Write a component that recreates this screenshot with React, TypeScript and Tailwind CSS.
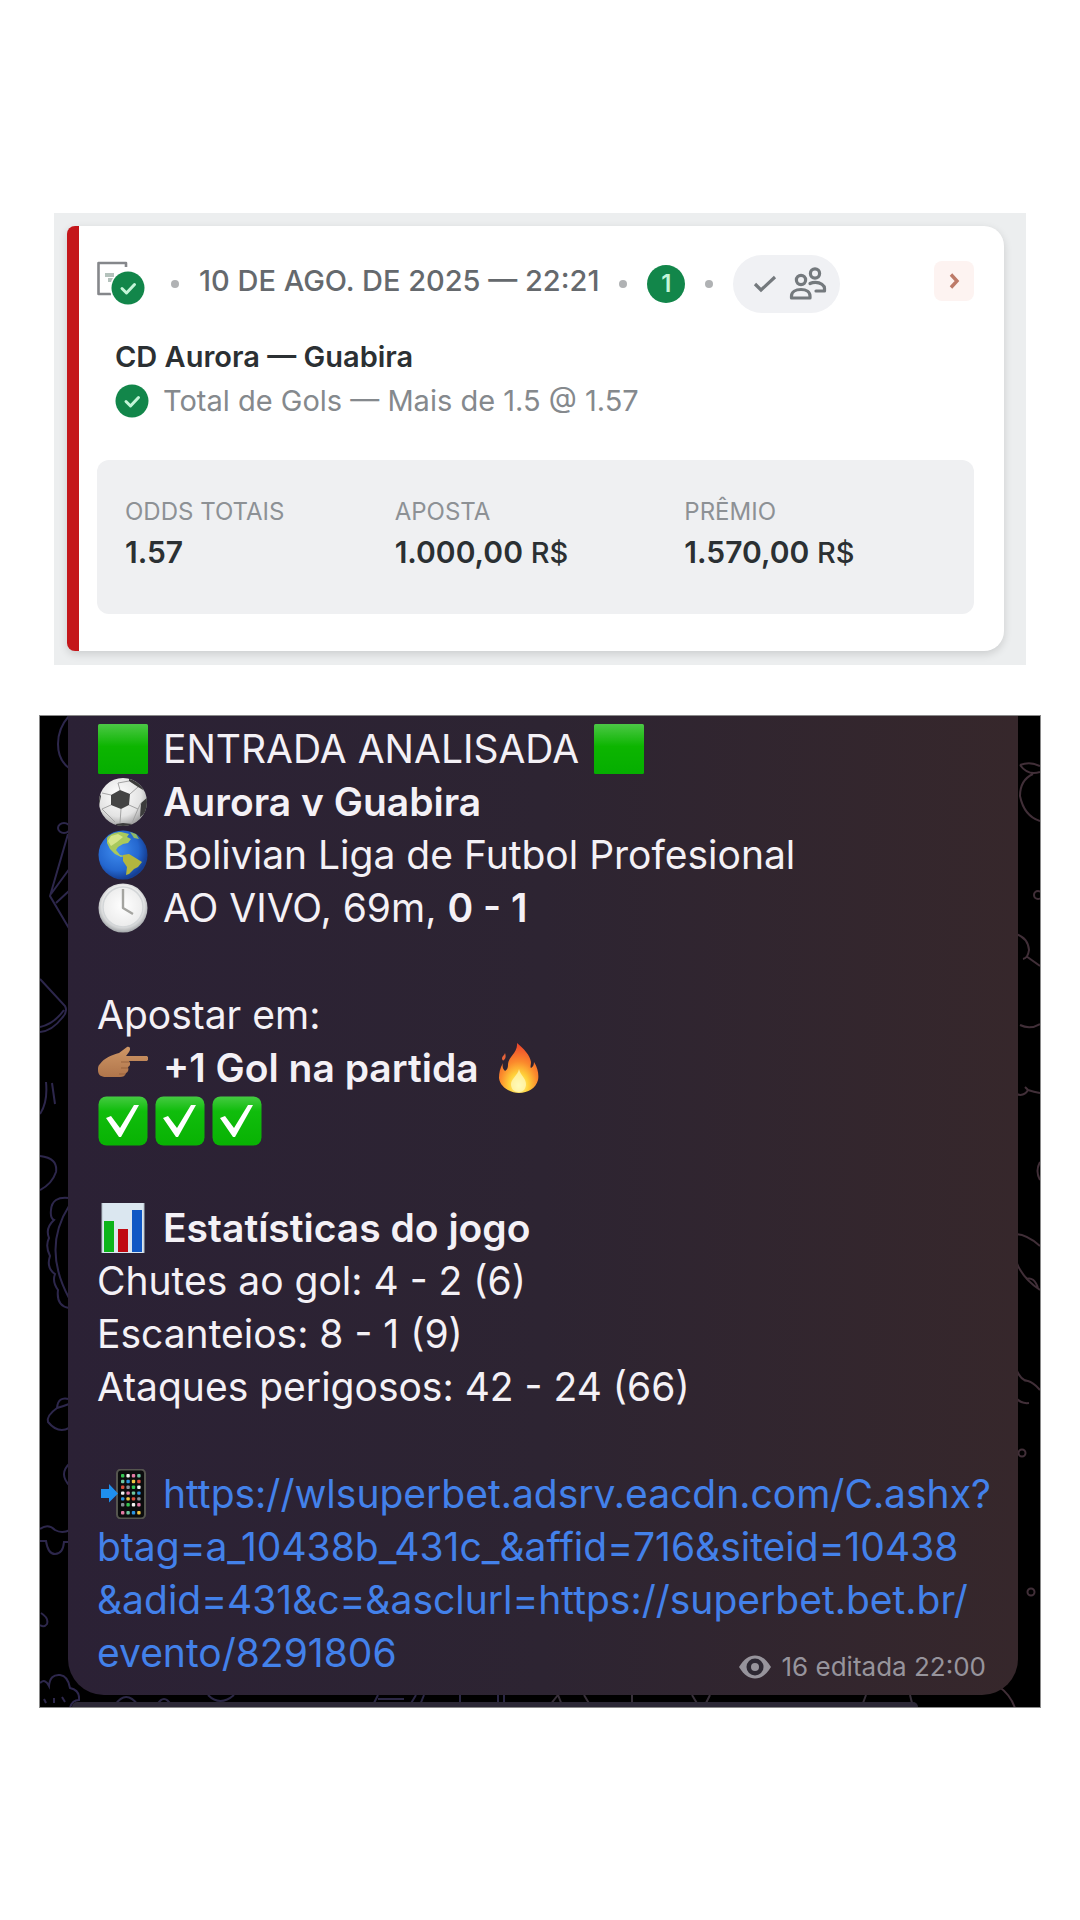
import React from "react";

const FONT = "font-['Inter','Liberation_Sans',sans-serif]";

function CheckBadge() {
  return (
    <svg viewBox="0 0 34 34" className="size-[34px] shrink-0" aria-hidden="true">
      <circle cx="17" cy="17" r="16.5" fill="#12864a" />
      <path d="M11 17.5l4.5 4.5 8-8.5" fill="none" stroke="#c4f5d8" strokeWidth="3" strokeLinecap="round" strokeLinejoin="round" />
    </svg>
  );
}

function TicketIcon() {
  return (
    <svg viewBox="0 0 50 46" className="h-[46px] w-[50px] shrink-0" aria-hidden="true">
      <path d="M29 6V2H1.500v31H14" fill="none" stroke="#85878b" strokeWidth="2.600" strokeLinejoin="round" />
      <path d="M8 14h9M11 19h5" stroke="#b4c2bc" strokeWidth="4" />
      <circle cx="31" cy="27" r="18" fill="#fff" />
      <circle cx="31" cy="27" r="16.5" fill="#12864a" />
      <path d="M25 27.5l4.5 4.5 8-8.5" fill="none" stroke="#c4f5d8" strokeWidth="3" strokeLinecap="round" strokeLinejoin="round" />
    </svg>
  );
}

function Dot() {
  return <span className="size-2 shrink-0 rounded-sm bg-[#b0b2b4]" />;
}

function PeopleIcon() {
  return (
    <svg viewBox="0 0 38 34" className="h-[34px] w-[38px]" fill="none" stroke="#74797d" strokeWidth="3.200" strokeLinejoin="round" strokeLinecap="round" aria-hidden="true">
      <circle cx="12" cy="13" r="4.600" />
      <path d="M2.500 31v-2c0-4 4-6.500 9.500-6.500s9 2.500 9 6.500v2z" />
      <circle cx="26" cy="6.500" r="4.600" />
      <path d="M21 16.500c2-1 3.500-1.200 5.500-1.200 5 0 9 3.200 9 6v2.700H27" />
    </svg>
  );
}

function Stat({ label, value, unit }: { label: string; value: string; unit?: string }) {
  return (
    <div>
      <dt className="text-2xl leading-9 text-[#8d9195]">{label}</dt>
      <dd className="text-[30px] leading-[44px] font-semibold text-[#2b3033]">
        {value}
        {unit && <span className="text-[29px] font-medium"> {unit}</span>}
      </dd>
    </div>
  );
}

function BetCard() {
  return (
    <section className="mx-[54px] bg-[#eceeef] pt-[13px] pr-[22px] pb-[14px] pl-[13px]">
      <article className="rounded-l-lg rounded-r-[20px] border-l-[12px] border-[#c4161a] bg-white pt-[29px] pr-[30px] pb-[37px] pl-[18px] shadow-[0_3px_8px_rgba(0,0,0,0.14)]">
        <header className="flex h-[58px] items-center">
          <TicketIcon />
          <div className="ml-6 flex items-center gap-5">
            <Dot />
            <time className="pb-1.5 text-[29px] leading-9 font-medium whitespace-nowrap text-[#65696d]">10 DE AGO. DE 2025 — 22:21</time>
            <Dot />
            <span className="flex size-[38px] items-center justify-center rounded-full bg-[#12864a] text-2xl font-semibold text-[#c4f5d8]">1</span>
            <Dot />
            <span className="flex h-[58px] items-center gap-3 rounded-full bg-[#f0f1f4] pr-[13px] pl-5">
              <svg viewBox="0 0 24 20" className="h-5 w-6" aria-hidden="true">
                <path d="M2 10l6 6L22 3" fill="none" stroke="#74797d" strokeWidth="3.200" />
              </svg>
              <PeopleIcon />
            </span>
          </div>
          <button type="button" aria-label="Abrir aposta" className="mb-1.5 ml-auto flex size-10 items-center justify-center rounded-lg bg-[#fdf3f1]">
            <svg viewBox="0 0 12 18" className="h-[18px] w-3" aria-hidden="true">
              <path d="M3 2.500L9 9l-6 6.500" fill="none" stroke="#bd7a68" strokeWidth="3.400" />
            </svg>
          </button>
        </header>

        <div className="mt-[22px] pl-[18px]">
          <h2 className="text-[29px] leading-[44px] font-semibold text-[#2b3033]">CD Aurora — Guabira</h2>
          <p className="flex items-center gap-[14px] text-[29px] leading-[44px] text-[#85898d]">
            <CheckBadge />
            Total de Gols — Mais de 1.5 @ 1.57
          </p>
        </div>

        <dl className="mt-[37px] grid grid-cols-[270fr_290fr_262fr] rounded-xl bg-[#eff0f2] px-7 pt-[34px] pb-[39px]">
          <Stat label="ODDS TOTAIS" value="1.57" />
          <Stat label="APOSTA" value="1.000,00" unit="R$" />
          <Stat label="PRÊMIO" value="1.570,00" unit="R$" />
        </dl>
      </article>
    </section>
  );
}

function Emoji({ children, label }: { children: React.ReactNode; label: string }) {
  return (
    <svg viewBox="0 0 50 50" className="mx-px size-[50px] shrink-0" role="img" aria-label={label}>
      {children}
    </svg>
  );
}

function GreenSquare() {
  return (
    <Emoji label="Quadrado verde">
      <defs>
        <linearGradient id="sq" x1="0" y1="0" x2="0" y2="1">
          <stop offset="0" stopColor="#4cc846" />
          <stop offset="0.45" stopColor="#0cb500" />
          <stop offset="1" stopColor="#05ae00" />
        </linearGradient>
      </defs>
      <rect width="50" height="50" rx="1.500" fill="url(#sq)" />
    </Emoji>
  );
}

function Ball() {
  return (
    <Emoji label="Bola de futebol">
      <defs>
        <radialGradient id="ball" cx="0.42" cy="0.35" r="0.65">
          <stop offset="0" stopColor="#ffffff" />
          <stop offset="0.7" stopColor="#e3e3e3" />
          <stop offset="1" stopColor="#a5a5a5" />
        </radialGradient>
        <clipPath id="ballClip"><circle cx="25" cy="25" r="24" /></clipPath>
      </defs>
      <circle cx="25" cy="25" r="24" fill="url(#ball)" />
      <g clipPath="url(#ballClip)">
        <path d="M13 18l9-5 10 4-1 11-8 4-10-4z" fill="#444" />
        <path d="M31 0l10 5 6 9-7-4-9-6zM43 26l7-6v14l-8 6zM18 47l7-1 9 1-3 4H19zM0 14l3 5-2 10z" fill="#3c3c3c" />
        <path d="M22 13l-2-7 11-2M32 17l8-7M31 28l9 4 3-6M23 32l-1 14M13 28l-9 4M13 18l-9-2M40 32l-6 14M4 32l13 13" fill="none" stroke="#a3a3a3" strokeWidth="1" />
      </g>
    </Emoji>
  );
}

function Globe() {
  return (
    <Emoji label="Globo terrestre">
      <defs>
        <radialGradient id="sea" cx="0.4" cy="0.4" r="0.6">
          <stop offset="0" stopColor="#3f8df0" />
          <stop offset="0.7" stopColor="#2467cf" />
          <stop offset="1" stopColor="#153f94" />
        </radialGradient>
      </defs>
      <circle cx="25" cy="25" r="24.500" fill="url(#sea)" />
      <path d="M9 8c3-4 9-6 14-6l8 2-2 3 4 2-3 4-5 1-5 3-2 3 4 5 5 1-4 1-6-3-5-5-3-6z" fill="#a9c95c" />
      <path d="M13 6l7-2 5 3-6 5-6 4-3-5z" fill="#d6e58b" />
      <path d="M25 25l6-1 5 3 8 5-4 5-4 2-5 5-3 1 1-8-4-6z" fill="#b3b63e" />
      <path d="M32 2l6 2 3 5-5-1z" fill="#8fb765" />
    </Emoji>
  );
}

function Clock() {
  return (
    <Emoji label="Quatro horas">
      <defs>
        <radialGradient id="clock" cx="0.5" cy="0.45" r="0.55">
          <stop offset="0" stopColor="#ffffff" />
          <stop offset="0.75" stopColor="#ececec" />
          <stop offset="1" stopColor="#a2a6a9" />
        </radialGradient>
      </defs>
      <circle cx="25" cy="25" r="24.500" fill="url(#clock)" />
      <circle cx="25" cy="24" r="20" fill="none" stroke="#d3d6d8" strokeWidth="1.500" />
      <path d="M25 6v19l10 6" fill="none" stroke="#a4a4a0" strokeWidth="2.400" strokeLinejoin="round" />
    </Emoji>
  );
}

function Hand() {
  return (
    <Emoji label="Apontando para a direita">
      <defs>
        <linearGradient id="hand" x1="0" y1="0" x2="0" y2="1">
          <stop offset="0" stopColor="#cf9766" />
          <stop offset="1" stopColor="#b0754b" />
        </linearGradient>
      </defs>
      <path d="M2 21C6 15 14 12 21 10l8-6c3-1 4 2 2 5l-3 4h20c3 0 3 5 0 5H31c2 3 1 5-1 6 1 3 0 5-2 6-1 3-3 4-6 4H8c-5 0-8-2-8-7 0-3 0-4 2-6z" fill="url(#hand)" />
      <path d="M31 19h-8M30 25h-7M27 31h-6" stroke="#99633d" strokeWidth="1" />
    </Emoji>
  );
}

function Fire() {
  return (
    <Emoji label="Fogo">
      <defs>
        <radialGradient id="fire" cx="0.5" cy="0.85" r="0.8">
          <stop offset="0" stopColor="#fff9a8" />
          <stop offset="0.3" stopColor="#ffd23a" />
          <stop offset="0.6" stopColor="#fb8a2c" />
          <stop offset="1" stopColor="#ee4a2c" />
        </radialGradient>
      </defs>
      <path d="M23 0c7 6 13 12 14 19 0 3-1 5 0 6 2-1 3-3 3-6 4 6 5 13 4 18-2 8-10 13-19 13S6 44 5 35c0-5 1-10 4-15-1 4 0 6 2 8 2-1 3-3 3-6 0-9 10-12 9-22z" fill="url(#fire)" />
      <path d="M8 15c0-2 3-3 3-5 1 3 1 5-1 7-1 1-2 0-2-2z" fill="#e8643a" />
      <path d="M25 26c1 6 7 9 7 15 0 5-3 8-7 8-5 0-8-3-8-8 0-5 7-9 8-15z" fill="#fffbc0" opacity="0.7" />
    </Emoji>
  );
}

function CheckEmoji() {
  return (
    <Emoji label="Concluído">
      <defs>
        <linearGradient id="chk" x1="0" y1="0" x2="0" y2="1">
          <stop offset="0" stopColor="#45cb42" />
          <stop offset="0.3" stopColor="#10bd0c" />
          <stop offset="1" stopColor="#08b203" />
        </linearGradient>
      </defs>
      <rect x="0.500" y="0.500" width="49" height="49" rx="8" fill="url(#chk)" />
      <path d="M8 22l5-2 9 12L36 9h5L23 41h-2z" fill="#fff" />
    </Emoji>
  );
}

function ChartEmoji() {
  return (
    <Emoji label="Gráfico de barras">
      <rect x="4" width="42" height="50" fill="#dbe7f0" />
      <rect x="6" y="18" width="10" height="31" fill="#0cb41a" />
      <rect x="20" y="26" width="10" height="23" fill="#c00a12" />
      <rect x="34" y="7" width="10" height="42" fill="#0f57c4" />
      <path d="M4 0v50M46 0v50" stroke="#b4c0c8" strokeWidth="1" />
    </Emoji>
  );
}

const APP_COLOURS = ["#35c653", "#f2f2f2", "#e37aa5", "#6fc7a0", "#2b93e0", "#f0c543", "#d9503f", "#8a8f98"];
const APP_CELLS = [0, 1, 2, 3, 4, 5, 6].flatMap((row) => [0, 1, 2, 3].map((col) => ({ row, col })));

function PhoneEmoji() {
  return (
    <Emoji label="Celular com seta">
      <rect x="19" y="0.500" width="28" height="49" rx="4" fill="#0b0c0d" stroke="#55554f" strokeWidth="2" />
      {APP_CELLS.map(({ row, col }) => (
        <rect key={row * 4 + col} x={23 + col * 5.4} y={row === 6 ? 42 : 5 + row * 5.8} width="3.400" height="3.400" rx="1" fill={APP_COLOURS[(row * 3 + col) % 8]} />
      ))}
      <path d="M3 20h8v-5l9 9.500-9 9V29H3z" fill="#1f8fee" />
    </Emoji>
  );
}

function EyeIcon() {
  return (
    <svg viewBox="0 0 34 26" className="h-[26px] w-[34px]" aria-hidden="true">
      <path d="M1 13C6 5 11 1.500 17 1.500S28 5 33 13c-5 8-10 11.500-16 11.500S6 21 1 13z" fill="#97949c" />
      <circle cx="17" cy="13" r="8.500" fill="#2d2833" />
      <circle cx="17" cy="13" r="4" fill="#97949c" />
    </svg>
  );
}

function LeftDoodles() {
  return (
    <svg viewBox="0 0 40 992" className="absolute top-0 left-0 h-[992px] w-10" fill="none" stroke="#2d274c" strokeWidth="2" aria-hidden="true">
      <path d="M29 0Q18 12 18 28T29 52" />
      <ellipse cx="24" cy="112" rx="6" ry="5" />
      <path d="M28 118L10 180L30 214M11 178L30 152M16 187L30 174" />
      <path d="M0 263L25 290Q28 296 22 302Q12 315 0 316M0 311Q14 308 24 294" />
      <path d="M6 366Q8 386 0 398M12 367L15 388" />
      <path d="M0 440Q18 442 16 456Q12 468 0 474" />
      <path d="M29 482Q12 480 11 494Q10 502 14 504Q5 512 9 522Q5 530 10 540Q6 552 15 558Q12 566 18 574Q16 590 29 592M29 490Q2 532 29 582" />
      <path d="M29 683Q18 680 17 692Q6 700 8 706Q18 718 29 712M17 692Q24 690 29 688" />
      <path d="M30 747Q18 758 30 770" />
      <path d="M0 813Q8 807 15 814Q22 818 30 814M0 825H6Q8 838 15 838Q23 838 24 826H30" />
      <path d="M1 897Q9 902 7 908Q4 912 0 909" />
      <path d="M0 967Q5 962 9 970Q10 958 20 959Q28 960 30 972Q40 974 39 984Q32 984 30 992M4 983l2 4M14 982v5M22 981l3 5" />
    </svg>
  );
}

function RightDoodles() {
  return (
    <svg viewBox="0 0 24 992" className="absolute top-0 right-0 h-[992px] w-6 overflow-visible" fill="none" stroke="#412f38" strokeWidth="2" aria-hidden="true">
      <path d="M4 49Q14 45 24 50M4 49Q12 60 24 56M17 58Q4 64 4 80Q8 100 24 105" />
      <circle cx="22" cy="179" r="4" />
      <path d="M0 218Q12 222 13 234Q12 242 7 243M10 240L24 250" />
      <path d="M4 309Q14 314 24 308" />
      <path d="M0 378Q8 381 12 374L9 371M12 374Q18 376 24 377" />
      <path d="M24 446Q19 455 24 464" />
      <path d="M0 518Q12 519 24 530M0 545Q6 562 24 574M10 563Q18 560 22 572" />
      <path d="M0 653Q5 665 12 665Q17 666 24 674M0 682Q5 688 13 687" />
      <circle cx="6" cy="737" r="3.500" />
      <circle cx="15" cy="876" r="3.500" />
      <path d="M-18 970Q-6 978 -1 992" />
    </svg>
  );
}

function BottomDoodles() {
  return (
    <svg viewBox="0 0 980 14" className="absolute bottom-0 left-5 h-[14px] w-[980px]" fill="none" stroke="#2b2745" strokeWidth="2" aria-hidden="true">
      <path d="M55 12Q66 -4 78 12M97 12Q104 0 111 12M148 2Q160 14 174 2" />
      <path d="M313 12L318 2M318 6H344M350 12L356 2M360 12L364 2M400 2V12M438 2V12M444 2V12" />
      <g stroke="#38303a">
        <path d="M490 12L498 2L502 12M524 2L530 12M572 2V12M632 2L638 12M650 2L645 12M806 2L803 10M850 2L853 14" />
      </g>
    </svg>
  );
}

function Line({ children, tight = false }: { children: React.ReactNode; tight?: boolean }) {
  return <div className={tight ? "flex h-[53px] items-center gap-[5px]" : "flex h-[53px] items-center gap-[14px]"}>{children}</div>;
}

const LINK = "https://wlsuperbet.adsrv.eacdn.com/C.ashx?btag=a_10438b_431c_&affid=716&siteid=10438&adid=431&c=&asclurl=https://superbet.bet.br/evento/8291806";

function ChatMessage() {
  return (
    <section className="relative mx-[39px] mt-[50px] overflow-hidden border border-[#8a8a8a] bg-black pr-[22px] pl-7">
      <LeftDoodles />
      <RightDoodles />
      <BottomDoodles />
      <article className="relative rounded-b-[36px] bg-linear-to-r from-[#2b2135] via-[#2d2432] to-[#36272b] pt-[6px] pr-6 pb-4 pl-[29px] text-[39px] leading-[53px] text-[#f4f1f6]">
        <div className="flex flex-col gap-[54px]">
          <div>
            <Line><GreenSquare /><span>ENTRADA ANALISADA</span><GreenSquare /></Line>
            <Line><Ball /><strong className="font-semibold">Aurora v Guabira</strong></Line>
            <Line><Globe /><span>Bolivian Liga de Futbol Profesional</span></Line>
            <Line><Clock /><span>AO VIVO, 69m, <strong className="font-semibold">0 - 1</strong></span></Line>
          </div>
          <div>
            <Line>Apostar em:</Line>
            <Line><Hand /><strong className="font-semibold">+1 Gol na partida</strong><Fire /></Line>
            <Line tight><CheckEmoji /><CheckEmoji /><CheckEmoji /></Line>
          </div>
          <div>
            <Line><ChartEmoji /><strong className="font-semibold">Estatísticas do jogo</strong></Line>
            <Line>Chutes ao gol: 4 - 2 (6)</Line>
            <Line>Escanteios: 8 - 1 (9)</Line>
            <Line>Ataques perigosos: 42 - 24 (66)</Line>
          </div>
          <a href={LINK} className="block whitespace-nowrap text-[#4381ea]">
            <Line><PhoneEmoji /><span>https://wlsuperbet.adsrv.eacdn.com/C.ashx?</span></Line>
            <Line>btag=a_10438b_431c_&amp;affid=716&amp;siteid=10438</Line>
            <Line>&amp;adid=431&amp;c=&amp;asclurl=https://superbet.bet.br/</Line>
            <Line>evento/8291806</Line>
          </a>
        </div>
        <footer className="absolute right-8 bottom-3 flex items-center gap-[10px] text-[26px] leading-8 text-[#97949c]">
          <EyeIcon />
          <span>16 editada 22:00</span>
        </footer>
      </article>
      <div className="relative mt-[7px] mr-[100px] ml-1 h-[5px] rounded-t-md bg-[#2c2836]" />
    </section>
  );
}

export default function App() {
  return (
    <main className={`min-h-screen bg-white pt-[213px] pb-[213px] ${FONT}`}>
      <BetCard />
      <ChatMessage />
    </main>
  );
}
